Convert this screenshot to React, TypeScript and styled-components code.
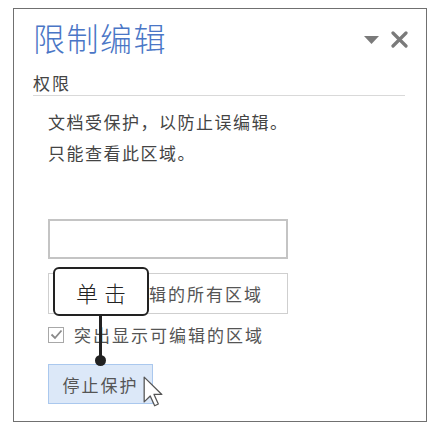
import styled, { createGlobalStyle } from "styled-components";

const GlobalStyle = createGlobalStyle`
  body {
    margin: 0;
    background: #ffffff;
    font-family: "Noto Sans CJK SC", "Noto Sans", sans-serif;
  }
`;

const Page = styled.div`
  padding: 8px 0 0 13px;
`;

const Pane = styled.div`
  position: relative;
  width: 414px;
  height: 414px;
  box-sizing: border-box;
  border: 1px solid #707070;
  padding: 8px 18px 0 19px;
`;

const Header = styled.div`
  display: flex;
  justify-content: space-between;
  align-items: flex-start;
`;

const Title = styled.h1`
  margin: 0;
  font-size: 32px;
  font-weight: 300;
  line-height: 40px;
  letter-spacing: 1.5px;
  color: #4a76c6;
`;

const HeaderIcons = styled.div`
  display: flex;
  align-items: center;
  gap: 12px;
  margin-top: 14px;
`;

const SectionLabel = styled.div`
  margin: 16px 3px 0 0;
  padding-bottom: 2px;
  border-bottom: 1px solid #d9d9d9;
  font-size: 17px;
  line-height: 20px;
  letter-spacing: 2px;
  color: #444;
`;

const Body = styled.div`
  padding-left: 15px;
  display: flex;
  flex-direction: column;
  align-items: flex-start;
`;

const Note = styled.p`
  margin: 10px 0 0;
  font-size: 17px;
  line-height: 31px;
  letter-spacing: 1.5px;
  color: #444;
`;

const Field = styled.div`
  margin-top: 51px;
  width: 240px;
  height: 40px;
  box-sizing: border-box;
  border: 2px solid #c4c4c4;
`;

const WideButton = styled.div`
  margin-top: 14px;
  width: 240px;
  height: 41px;
  box-sizing: border-box;
  border: 1px solid #cfcfcf;
  display: flex;
  align-items: center;
  justify-content: center;
  font-size: 17px;
  letter-spacing: 2px;
  color: #555;
`;

const CheckRow = styled.label`
  margin-top: 12px;
  display: flex;
  align-items: center;
  gap: 10px;
  height: 17px;
  font-size: 17px;
  letter-spacing: 2px;
  color: #555;
`;

const Box = styled.span`
  width: 16px;
  height: 16px;
  box-sizing: border-box;
  border: 1px solid #a8a8a8;
  display: flex;
  align-items: center;
  justify-content: center;
`;

const StopButton = styled.div`
  margin-top: 21px;
  width: 105px;
  height: 40px;
  box-sizing: border-box;
  background: #dce8f8;
  border: 1px solid #aac8ee;
  display: flex;
  align-items: center;
  justify-content: center;
  font-size: 17px;
  letter-spacing: 2px;
  color: #555;
`;

const Callout = styled.div`
  position: absolute;
  left: 39px;
  top: 258px;
  display: flex;
  flex-direction: column;
  align-items: center;
`;

const Bubble = styled.div`
  width: 96px;
  height: 49px;
  box-sizing: border-box;
  border: 2.5px solid #222;
  border-radius: 6px;
  background: #fff;
  display: flex;
  align-items: center;
  justify-content: center;
  font-size: 22px;
  font-weight: 300;
  letter-spacing: 6px;
  padding-left: 6px;
  color: #222;
`;

const Stem = styled.div`
  width: 3px;
  height: 42px;
  margin-left: -2px;
  background: #222;
`;

const Dot = styled.div`
  width: 11px;
  height: 11px;
  margin: -3px 0 0 -2px;
  border-radius: 50%;
  background: #222;
`;

const Pointer = styled.svg`
  position: absolute;
  left: 129px;
  top: 367px;
`;

export default function App() {
  return (
    <Page>
      <GlobalStyle />
      <Pane>
        <Header>
          <Title>限制编辑</Title>
          <HeaderIcons>
            <svg width="15" height="8" viewBox="0 0 15 8">
              <path d="M0 0 H15 L7.5 8 Z" fill="#7a7a7a" />
            </svg>
            <svg width="17" height="17" viewBox="0 0 17 17">
              <path
                d="M2 2 L15 15 M15 2 L2 15"
                stroke="#7a7a7a"
                strokeWidth="3.2"
                strokeLinecap="round"
              />
            </svg>
          </HeaderIcons>
        </Header>
        <SectionLabel>权限</SectionLabel>
        <Body>
          <Note>
            文档受保护，以防止误编辑。
            <br />
            只能查看此区域。
          </Note>
          <Field />
          <WideButton>显示可编辑的所有区域</WideButton>
          <CheckRow>
            <Box>
              <svg width="13" height="11" viewBox="0 0 13 11">
                <path
                  d="M1.5 5.5 L5 9 L11.5 1.5"
                  fill="none"
                  stroke="#8a8a8a"
                  strokeWidth="1.8"
                />
              </svg>
            </Box>
            突出显示可编辑的区域
          </CheckRow>
          <StopButton>停止保护</StopButton>
        </Body>
        <Callout>
          <Bubble>单击</Bubble>
          <Stem />
          <Dot />
        </Callout>
        <Pointer width="20" height="31" viewBox="0 0 12.5 19.5">
          <path
            d="M0.7 0.7 V16.3 L4.5 12.6 L7.3 18.7 L9.6 17.6 L6.9 11.6 H11.8 Z"
            fill="#fff"
            stroke="#555"
            strokeWidth="0.8"
            strokeLinejoin="round"
          />
        </Pointer>
      </Pane>
    </Page>
  );
}
